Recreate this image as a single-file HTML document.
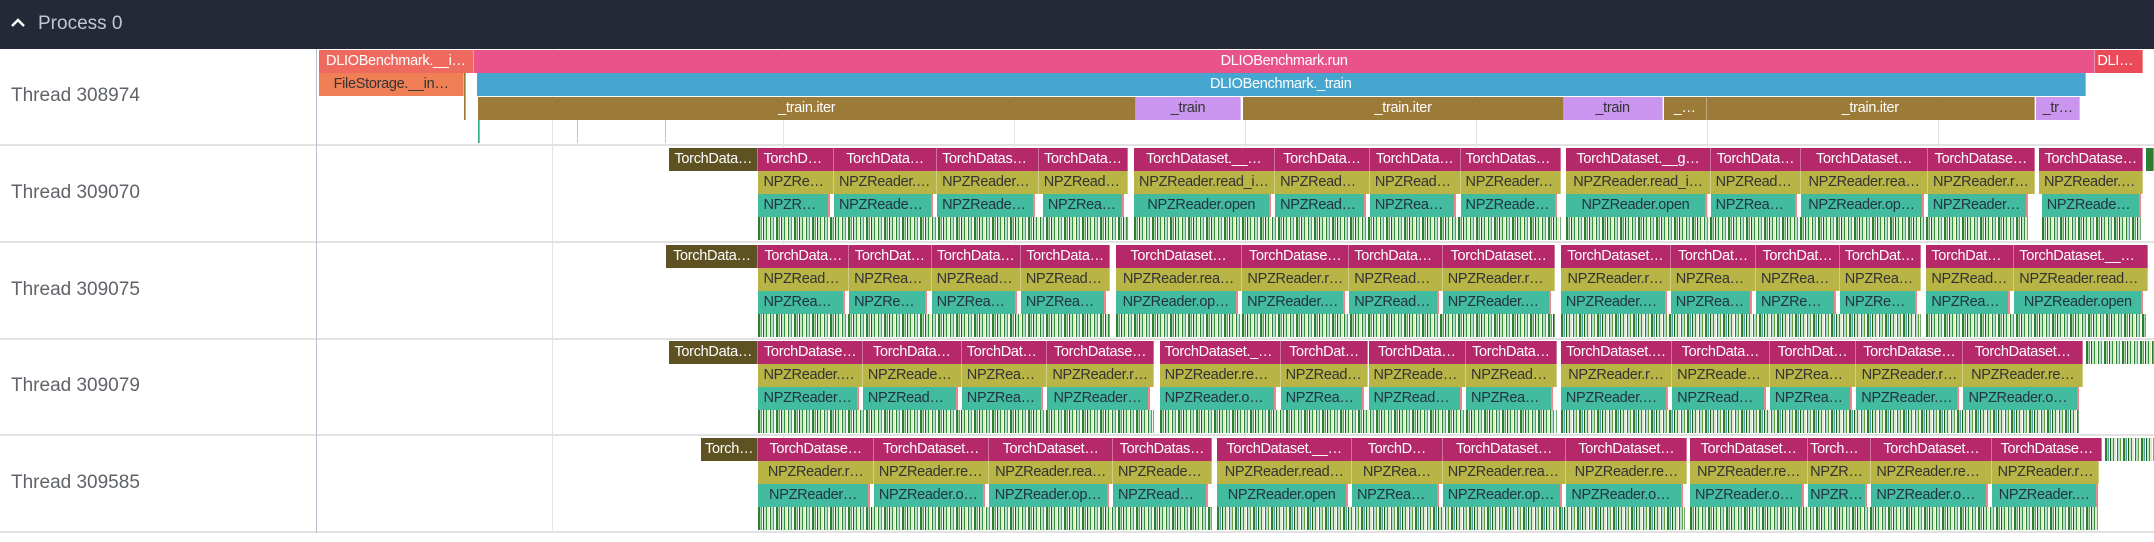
<!DOCTYPE html>
<html><head><meta charset="utf-8"><style>
*{margin:0;padding:0;box-sizing:border-box}
body{width:2154px;height:542px;background:#fff;position:relative;overflow:hidden;font-family:"Liberation Sans Narrow","Liberation Sans",sans-serif}
.hdr{position:absolute;left:0;top:0;width:2154px;height:49px;background:#232936;color:#c3c7ce;font-size:19px;z-index:3}
.hdr span{position:absolute;left:38px;top:13px}
.hdr svg{position:absolute;left:10px;top:17px}
.row{position:absolute;left:0;width:2154px;height:97px;border-bottom:2px solid #e2e2e2;z-index:2}
.lbl{position:absolute;left:11px;top:36px;font-size:19px;color:#5f6368;font-family:"Liberation Sans",sans-serif}
.vl{position:absolute;left:316px;top:49px;width:1px;height:484px;background:#b8c2cc;z-index:3}
.g{position:absolute;top:49px;width:1px;height:484px;background:#e4e4e4;z-index:1}
.b{position:absolute;height:23px;left:calc(var(--l)*1.374px);width:calc(var(--w)*1.374px);font-size:14.5px;letter-spacing:-0.3px;line-height:23px;text-align:center;white-space:nowrap;overflow:hidden;text-overflow:ellipsis;padding:0 5px;border-right:1px solid rgba(255,255,255,.35)}
.t{top:2px;background:#b5296a;color:#fff}
.o{top:2px;background:#5e5223;color:#fff}
.r{top:25px;background:#b8b445;color:#333}
.p{top:48px;background:#43bb9f;color:#234;border-right:2px solid #e88}
.s{top:71px;padding:0;background:repeating-linear-gradient(90deg,#2e7d32 0 2px,#a5d6a7 2px 3px,#4aa3a0 3px 4px,#fff 4px 5px,#1b5e20 5px 6px,#c8e6c9 6px 8px,#388e3c 8px 9px,#dcedc8 9px 11px,#fff 11px 12px,#2e7d32 12px 13px,#b2dfdb 13px 15px,#689f38 15px 16px,#f1f8e9 16px 18px)}
</style></head><body>
<div class="hdr"><svg width="16" height="12" viewBox="0 0 16 12"><path d="M2 9 L8 3 L14 9" stroke="#fff" stroke-width="2.5" fill="none"/></svg><span>Process 0</span></div>

<div class="g" style="left:552px"></div><div class="g" style="left:783px"></div><div class="g" style="left:1014px"></div><div class="g" style="left:1245px"></div><div class="g" style="left:1476px"></div><div class="g" style="left:1707px"></div><div class="g" style="left:1938px"></div>

<div class="row" style="top:49px"><div class="lbl">Thread 308974</div>
<div class="b" style="--l:232;--w:113;top:1px;background:#ee6a5f;color:#fff">DLIOBenchmark.__i…</div>
<div class="b" style="--l:345;--w:1180;top:1px;background:#e9538a;color:#fff">DLIOBenchmark.run</div>
<div class="b" style="--l:1525;--w:35;top:1px;background:#ea4a5a;color:#fff;padding:0 2px">DLIOB…</div>
<div class="b" style="--l:232;--w:106;top:24px;background:#f07f55;color:#333">FileStorage.__in…</div>
<div class="b" style="--l:347;--w:1171;top:24px;background:#46a6cf;color:#fff">DLIOBenchmark._train</div>
<div class="b" style="--l:348;--w:479;top:48px;background:#9c7a38;color:#fff">_train.iter</div>
<div class="b" style="--l:827;--w:76;top:48px;background:#c995ef;color:#333">_train</div>
<div class="b" style="--l:905;--w:233;top:48px;background:#9c7a38;color:#fff">_train.iter</div>
<div class="b" style="--l:1138;--w:72;top:48px;background:#c995ef;color:#333">_train</div>
<div class="b" style="--l:1211;--w:31;top:48px;background:#9c7a38;color:#fff;padding:0 2px">_…</div>
<div class="b" style="--l:1242;--w:239;top:48px;background:#9c7a38;color:#fff">_train.iter</div>
<div class="b" style="--l:1482;--w:32;top:48px;background:#c995ef;color:#333;padding:0 2px">_tr…</div>
<div class="b" style="--l:338;--w:1;top:24px;height:47px;background:#9c7a38;padding:0"></div>
<div class="b" style="--l:348;--w:1.5;top:71px;background:#3a8;padding:0"></div>
<div class="b" style="--l:420;--w:1;top:71px;background:#f7a;padding:0"></div>
<div class="b" style="--l:484;--w:1;top:71px;background:#f7a;padding:0"></div>
</div>

<div class="row" style="top:146px"><div class="lbl">Thread 309070</div>
<div class="b o" style="--l:487;--w:65">TorchData…</div>
<div class="b t" style="--l:552;--w:55">TorchDat…</div><div class="b t" style="--l:607;--w:75">TorchData…</div><div class="b t" style="--l:682;--w:74">TorchDatase…</div><div class="b t" style="--l:756;--w:65">TorchData…</div>
<div class="b t" style="--l:825;--w:103">TorchDataset.__…</div><div class="b t" style="--l:928;--w:69">TorchData…</div><div class="b t" style="--l:997;--w:66">TorchData…</div><div class="b t" style="--l:1063;--w:73">TorchDataset…</div>
<div class="b t" style="--l:1140;--w:105">TorchDataset.__g…</div><div class="b t" style="--l:1245;--w:66">TorchData…</div><div class="b t" style="--l:1311;--w:92">TorchDataset…</div><div class="b t" style="--l:1403;--w:78">TorchDatase…</div><div class="b t" style="--l:1484;--w:76">TorchDatase…</div>
<div class="b r" style="--l:552;--w:55">NPZReader…</div><div class="b r" style="--l:607;--w:75">NPZReader.r…</div><div class="b r" style="--l:682;--w:74">NPZReader.r…</div><div class="b r" style="--l:756;--w:65">NPZReader…</div>
<div class="b r" style="--l:825;--w:103">NPZReader.read_i…</div><div class="b r" style="--l:928;--w:69">NPZReader…</div><div class="b r" style="--l:997;--w:66">NPZReader…</div><div class="b r" style="--l:1063;--w:73">NPZReader.r…</div>
<div class="b r" style="--l:1140;--w:105">NPZReader.read_i…</div><div class="b r" style="--l:1245;--w:66">NPZReader…</div><div class="b r" style="--l:1311;--w:92">NPZReader.rea…</div><div class="b r" style="--l:1403;--w:78">NPZReader.r…</div><div class="b r" style="--l:1484;--w:76">NPZReader.r…</div>
<div class="b p" style="--l:552;--w:52">NPZReade…</div><div class="b p" style="--l:607;--w:72">NPZReader…</div><div class="b p" style="--l:682;--w:71">NPZReader…</div><div class="b p" style="--l:759;--w:59">NPZReade…</div>
<div class="b p" style="--l:825;--w:100">NPZReader.open</div><div class="b p" style="--l:928;--w:66">NPZReade…</div><div class="b p" style="--l:997;--w:63">NPZReade…</div><div class="b p" style="--l:1063;--w:70">NPZReader.…</div>
<div class="b p" style="--l:1140;--w:102">NPZReader.open</div><div class="b p" style="--l:1245;--w:63">NPZReade…</div><div class="b p" style="--l:1311;--w:89">NPZReader.op…</div><div class="b p" style="--l:1403;--w:73">NPZReader.…</div><div class="b p" style="--l:1486;--w:72">NPZReader.o…</div>
<div class="b s" style="--l:552;--w:269"></div><div class="b s" style="--l:825;--w:311"></div><div class="b s" style="--l:1140;--w:336"></div><div class="b s" style="--l:1486;--w:72"></div>
<div class="b" style="--l:1562;--w:6;top:2px;background:#2e7d32;padding:0"></div>
</div>

<div class="row" style="top:243px"><div class="lbl">Thread 309075</div>
<div class="b o" style="--l:485;--w:67">TorchData…</div>
<div class="b t" style="--l:552;--w:66">TorchData…</div><div class="b t" style="--l:618;--w:60">TorchDat…</div><div class="b t" style="--l:678;--w:65">TorchData…</div><div class="b t" style="--l:743;--w:65">TorchData…</div>
<div class="b t" style="--l:812;--w:92">TorchDataset…</div><div class="b t" style="--l:904;--w:78">TorchDatase…</div><div class="b t" style="--l:982;--w:68">TorchDatas…</div><div class="b t" style="--l:1050;--w:82">TorchDataset…</div>
<div class="b t" style="--l:1136;--w:80">TorchDataset…</div><div class="b t" style="--l:1216;--w:62">TorchDat…</div><div class="b t" style="--l:1278;--w:61">TorchDat…</div><div class="b t" style="--l:1339;--w:59">TorchDat…</div>
<div class="b t" style="--l:1402;--w:64">TorchData…</div><div class="b t" style="--l:1466;--w:97">TorchDataset.__g…</div>
<div class="b r" style="--l:552;--w:66">NPZReader…</div><div class="b r" style="--l:618;--w:60">NPZReade…</div><div class="b r" style="--l:678;--w:65">NPZReader…</div><div class="b r" style="--l:743;--w:65">NPZReader…</div>
<div class="b r" style="--l:812;--w:92">NPZReader.rea…</div><div class="b r" style="--l:904;--w:78">NPZReader.r…</div><div class="b r" style="--l:982;--w:68">NPZReader…</div><div class="b r" style="--l:1050;--w:82">NPZReader.rea…</div>
<div class="b r" style="--l:1136;--w:80">NPZReader.r…</div><div class="b r" style="--l:1216;--w:62">NPZReade…</div><div class="b r" style="--l:1278;--w:61">NPZReade…</div><div class="b r" style="--l:1339;--w:59">NPZReade…</div>
<div class="b r" style="--l:1402;--w:64">NPZReader…</div><div class="b r" style="--l:1466;--w:97">NPZReader.read_i…</div>
<div class="b p" style="--l:552;--w:63">NPZReade…</div><div class="b p" style="--l:618;--w:57">NPZReade…</div><div class="b p" style="--l:678;--w:62">NPZReade…</div><div class="b p" style="--l:743;--w:62">NPZReade…</div>
<div class="b p" style="--l:812;--w:89">NPZReader.op…</div><div class="b p" style="--l:904;--w:75">NPZReader.…</div><div class="b p" style="--l:982;--w:65">NPZReade…</div><div class="b p" style="--l:1050;--w:79">NPZReader.op…</div>
<div class="b p" style="--l:1136;--w:77">NPZReader.o…</div><div class="b p" style="--l:1216;--w:59">NPZReade…</div><div class="b p" style="--l:1278;--w:58">NPZReade…</div><div class="b p" style="--l:1339;--w:56">NPZReade…</div>
<div class="b p" style="--l:1402;--w:61">NPZReade…</div><div class="b p" style="--l:1466;--w:94">NPZReader.open</div>
<div class="b s" style="--l:552;--w:256"></div><div class="b s" style="--l:812;--w:320"></div><div class="b s" style="--l:1136;--w:262"></div><div class="b s" style="--l:1402;--w:160"></div>
</div>

<div class="row" style="top:339px"><div class="lbl">Thread 309079</div>
<div class="b o" style="--l:487;--w:65">TorchData…</div>
<div class="b t" style="--l:552;--w:76">TorchDatase…</div><div class="b t" style="--l:628;--w:72">TorchData…</div><div class="b t" style="--l:700;--w:62">TorchData…</div><div class="b t" style="--l:762;--w:78">TorchDatase…</div>
<div class="b t" style="--l:844;--w:88">TorchDataset.__…</div><div class="b t" style="--l:932;--w:64">TorchDat…</div><div class="b t" style="--l:996;--w:71">TorchData…</div><div class="b t" style="--l:1067;--w:66">TorchData…</div>
<div class="b t" style="--l:1136;--w:81">TorchDataset.…</div><div class="b t" style="--l:1217;--w:71">TorchData…</div><div class="b t" style="--l:1288;--w:63">TorchDat…</div><div class="b t" style="--l:1351;--w:78">TorchDatase…</div><div class="b t" style="--l:1429;--w:87">TorchDataset…</div>
<div class="b r" style="--l:552;--w:76">NPZReader.r…</div><div class="b r" style="--l:628;--w:72">NPZReader…</div><div class="b r" style="--l:700;--w:62">NPZReader…</div><div class="b r" style="--l:762;--w:78">NPZReader.r…</div>
<div class="b r" style="--l:844;--w:88">NPZReader.read…</div><div class="b r" style="--l:932;--w:64">NPZReade…</div><div class="b r" style="--l:996;--w:71">NPZReader…</div><div class="b r" style="--l:1067;--w:66">NPZReader…</div>
<div class="b r" style="--l:1136;--w:81">NPZReader.r…</div><div class="b r" style="--l:1217;--w:71">NPZReader…</div><div class="b r" style="--l:1288;--w:63">NPZReader…</div><div class="b r" style="--l:1351;--w:78">NPZReader.r…</div><div class="b r" style="--l:1429;--w:87">NPZReader.re…</div>
<div class="b p" style="--l:552;--w:73">NPZReader…</div><div class="b p" style="--l:628;--w:69">NPZReade…</div><div class="b p" style="--l:700;--w:59">NPZReade…</div><div class="b p" style="--l:762;--w:75">NPZReader…</div>
<div class="b p" style="--l:844;--w:85">NPZReader.open</div><div class="b p" style="--l:932;--w:61">NPZReade…</div><div class="b p" style="--l:996;--w:68">NPZReade…</div><div class="b p" style="--l:1067;--w:63">NPZReade…</div>
<div class="b p" style="--l:1136;--w:78">NPZReader.o…</div><div class="b p" style="--l:1217;--w:68">NPZReade…</div><div class="b p" style="--l:1288;--w:60">NPZReade…</div><div class="b p" style="--l:1351;--w:75">NPZReader.…</div><div class="b p" style="--l:1429;--w:84">NPZReader.op…</div>
<div class="b s" style="--l:552;--w:288"></div><div class="b s" style="--l:844;--w:289"></div><div class="b s" style="--l:1136;--w:377"></div>
<div class="b s" style="--l:1518;--w:50;top:2px"></div>
</div>

<div class="row" style="top:436px"><div class="lbl">Thread 309585</div>
<div class="b o" style="--l:510;--w:42;padding:0 2px">Torch…</div>
<div class="b t" style="--l:552;--w:84">TorchDatase…</div><div class="b t" style="--l:636;--w:84">TorchDataset…</div><div class="b t" style="--l:720;--w:90">TorchDataset…</div><div class="b t" style="--l:810;--w:72">TorchDatas…</div>
<div class="b t" style="--l:886;--w:98">TorchDataset.__…</div><div class="b t" style="--l:984;--w:66">TorchD…</div><div class="b t" style="--l:1050;--w:90">TorchDataset…</div><div class="b t" style="--l:1140;--w:88">TorchDataset…</div>
<div class="b t" style="--l:1230;--w:86">TorchDataset…</div><div class="b t" style="--l:1316;--w:46;padding:0 2px">TorchD…</div><div class="b t" style="--l:1362;--w:88">TorchDataset…</div><div class="b t" style="--l:1450;--w:80">TorchDatase…</div>
<div class="b r" style="--l:552;--w:84">NPZReader.r…</div><div class="b r" style="--l:636;--w:84">NPZReader.rea…</div><div class="b r" style="--l:720;--w:90">NPZReader.rea…</div><div class="b r" style="--l:810;--w:72">NPZReader…</div>
<div class="b r" style="--l:886;--w:98">NPZReader.read…</div><div class="b r" style="--l:984;--w:66">NPZRea…</div><div class="b r" style="--l:1050;--w:90">NPZReader.read…</div><div class="b r" style="--l:1140;--w:88">NPZReader.re…</div>
<div class="b r" style="--l:1230;--w:86">NPZReader.re…</div><div class="b r" style="--l:1316;--w:46;padding:0 2px">NPZRea…</div><div class="b r" style="--l:1362;--w:88">NPZReader.rea…</div><div class="b r" style="--l:1450;--w:78">NPZReader.r…</div>
<div class="b p" style="--l:552;--w:81">NPZReader…</div><div class="b p" style="--l:636;--w:81">NPZReader.op…</div><div class="b p" style="--l:720;--w:87">NPZReader.op…</div><div class="b p" style="--l:810;--w:69">NPZReader…</div>
<div class="b p" style="--l:886;--w:95">NPZReader.open</div><div class="b p" style="--l:984;--w:63">NPZReade…</div><div class="b p" style="--l:1050;--w:87">NPZReader.open</div><div class="b p" style="--l:1140;--w:85">NPZReader.op…</div>
<div class="b p" style="--l:1230;--w:83">NPZReader.op…</div><div class="b p" style="--l:1316;--w:43;padding:0 2px">NPZRe…</div><div class="b p" style="--l:1362;--w:85">NPZReader.op…</div><div class="b p" style="--l:1450;--w:77">NPZReader.…</div>
<div class="b s" style="--l:552;--w:330"></div><div class="b s" style="--l:886;--w:340"></div><div class="b s" style="--l:1230;--w:297"></div>
<div class="b s" style="--l:1532;--w:36;top:2px"></div>
</div>

<div class="vl"></div>
</body></html>
